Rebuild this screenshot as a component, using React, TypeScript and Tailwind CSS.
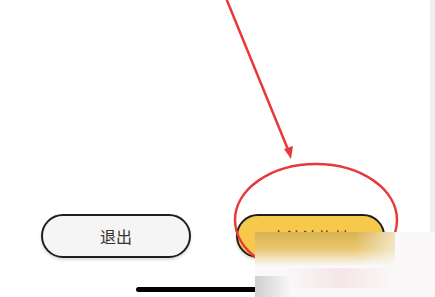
import React from "react";

export default function App() {
  return (
    <div className="relative h-[297px] w-[435px] overflow-hidden bg-white" style={{ fontFamily: '"Noto Sans CJK SC", "Noto Sans", sans-serif' }}>
      <div className="flex h-full">
        <div className="flex flex-1 flex-col">
          <div className="h-[214px]" />
          <div className="flex gap-[45px] pl-[41px]">
            <button className="h-[44px] w-[150px] rounded-full border-2 border-[#1f1f1f] bg-[#f5f5f5] text-[16px] text-[#333] shadow-[0_2px_3px_rgba(0,0,0,0.15)]">
              退出
            </button>
            <button className="h-[44px] w-[149px] rounded-full border-2 border-[#1f1f1f] bg-[#f6c84b] pt-[2px] text-[16px] text-[#333] shadow-[0_2px_3px_rgba(0,0,0,0.15)]">
              去清洁拖地
            </button>
          </div>
          <div className="mt-[29px] ml-[136px] h-[5px] w-[162px] rounded-full bg-black" />
        </div>
        <div className="w-[5px] bg-[#efefef]" />
      </div>

      {/* annotation */}
      <svg className="pointer-events-none absolute inset-0" width="435" height="297">
        <line x1="226" y1="-2" x2="289" y2="152" stroke="#e8383a" strokeWidth="2.5" strokeLinecap="round" />
        <polygon points="291,159 284,149 293,146" fill="#e8383a" />
        <ellipse cx="316" cy="220" rx="81" ry="56" fill="none" stroke="#e8383a" strokeWidth="2.5" />
      </svg>

      {/* blurred watermark */}
      <div className="absolute left-[255px] top-[232px] h-[65px] w-[180px] bg-[#faf8f8]">
        <div className="absolute left-0 top-0 h-[34px] w-[140px] bg-gradient-to-b from-[#d8b352] via-[#e8c66e] to-[#faf8f8]" />
        <div className="absolute left-[100px] top-0 h-[34px] w-[60px] bg-gradient-to-r from-transparent to-[#faf8f8]" />
        <div className="absolute left-[30px] top-[36px] h-[20px] w-[110px] bg-gradient-to-r from-transparent via-[#f4e6e8] to-transparent" />
        <div className="absolute left-0 top-[44px] h-[21px] w-[36px] bg-gradient-to-r from-[#cfcfcf] to-transparent" />
      </div>
    </div>
  );
}
